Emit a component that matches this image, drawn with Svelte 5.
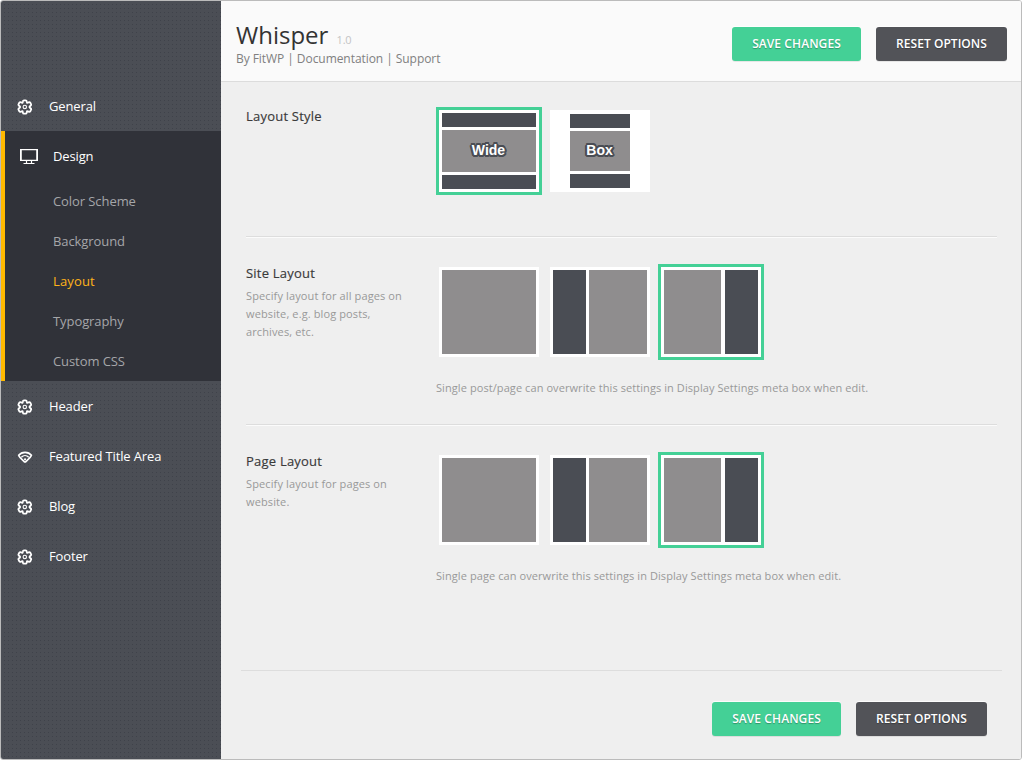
<script>
  const before = [{ label: 'General', icon: 'gear' }];
  const after = [
    { label: 'Header', icon: 'gear' },
    { label: 'Featured Title Area', icon: 'wifi' },
    { label: 'Blog', icon: 'gear' },
    { label: 'Footer', icon: 'gear' }
  ];
  const sub = ['Color Scheme', 'Background', 'Layout', 'Typography', 'Custom CSS'];
</script>

{#snippet icon(name)}
  {#if name === 'gear'}
    <svg class="icon" width="16" height="16" viewBox="0 0 16 16" fill="none" stroke="#fff">
      <path
        stroke-width="1.8"
        stroke-linejoin="round"
        d="M5.900 2.400Q6 1.300 7 1.300h1.600Q9.600 1.300 9.700 2.400L10 3.800 11.600 3.300Q12.800 2.900 13.300 3.800L14 5.100Q14.500 6 13.600 6.700L12.600 7.500v1L13.600 9.300Q14.500 10 14 10.900L13.300 12.200Q12.800 13.100 11.600 12.700L10 12.200 9.700 13.600Q9.600 14.700 8.600 14.700H7Q6 14.700 5.900 13.600L5.600 12.200 4 12.700Q2.800 13.100 2.300 12.200L1.600 10.900Q1.100 10 2 9.300L3 8.500v-1L2 6.700Q1.100 6 1.600 5.100L2.300 3.800Q2.800 2.900 4 3.300L5.600 3.800z"
      />
      <circle cx="7.800" cy="8" r="1.700" stroke-width="1.100" />
    </svg>
  {:else}
    <svg class="icon" width="16" height="16" viewBox="0 0 16 16" fill="none" stroke="#fff">
      <path stroke-width="1.800" stroke-linejoin="round" d="M1.700 6.300C4.800 2.300 11.300 2.300 14.400 6.300Q14.300 7.700 8.600 12.800H7.500Q1.800 7.700 1.700 6.300z" />
      <path stroke-width="1.300" d="M4.300 8.200c2.200-2.200 5.300-2.200 7.500 0" />
      <circle cx="8.050" cy="10.300" r="1.100" fill="#fff" stroke="none" />
    </svg>
  {/if}
{/snippet}

{#snippet actions()}
  <div class="actions">
    <button class="save">SAVE CHANGES</button>
    <button class="reset">RESET OPTIONS</button>
  </div>
{/snippet}

{#snippet layouts()}
  <div class="choices">
    <div class="choice cols"><i class="content"></i></div>
    <div class="choice cols"><i class="side"></i><i class="content"></i></div>
    <div class="choice cols right selected"><i class="content"></i><i class="side"></i></div>
  </div>
{/snippet}

<div class="frame">
  <nav>
    {#each before as item}
      <div class="item">{@render icon(item.icon)}<span>{item.label}</span></div>
    {/each}
    <div class="group">
      <div class="item">
        <svg class="icon" width="20" height="18" viewBox="0 0 20 18" fill="none" stroke="#fff">
          <path stroke-width="1.200" d="M1 1.600h18M1 12.400h18" />
          <path stroke-width="1.800" d="M1.900 1v12M18.100 1v12" />
          <path stroke-width="1.200" d="M7.500 13v2M12.500 13v2M4.500 15.500h11" />
        </svg>
        <span>Design</span>
      </div>
      {#each sub as label}
        <div class="sub" class:current={label === 'Layout'}>{label}</div>
      {/each}
    </div>
    {#each after as item}
      <div class="item">{@render icon(item.icon)}<span>{item.label}</span></div>
    {/each}
  </nav>

  <main>
    <header>
      <div>
        <h1>Whisper <small>1.0</small></h1>
        <p class="links">By FitWP | Documentation | Support</p>
      </div>
      {@render actions()}
    </header>

    <div class="body">
      <section class="first">
        <div class="label"><h2>Layout Style</h2></div>
        <div class="field">
          <div class="choices">
            <div class="choice rows wide selected"><i></i><b>Wide</b><i></i></div>
            <div class="choice rows box"><i></i><b>Box</b><i></i></div>
          </div>
        </div>
      </section>
      <section class="second">
        <div class="label">
          <h2>Site Layout</h2>
          <p>Specify layout for all pages on website, e.g. blog posts, archives, etc.</p>
        </div>
        <div class="field">
          {@render layouts()}
          <p class="note">Single post/page can overwrite this settings in Display Settings meta box when edit.</p>
        </div>
      </section>
      <section class="third">
        <div class="label">
          <h2>Page Layout</h2>
          <p>Specify layout for pages on website.</p>
        </div>
        <div class="field">
          {@render layouts()}
          <p class="note">Single page can overwrite this settings in Display Settings meta box when edit.</p>
        </div>
      </section>
    </div>

    <footer>{@render actions()}</footer>
  </main>
</div>

<style>
  :global(body) {
    background: #fff;
  }
  .frame {
    box-sizing: border-box;
    width: 1022px;
    height: 760px;
    border: 1px solid #bbb;
    border-radius: 3px;
    overflow: hidden;
    display: flex;
    font-family: 'Open Sans', sans-serif;
    font-size: 13px;
  }
  h1, h2, p {
    margin: 0;
    font-weight: 400;
  }
  nav {
    box-sizing: border-box;
    width: 220px;
    padding-top: 80px;
    background-color: #4b4e55;
    background-image: conic-gradient(from 90deg at 3px 3px, #3f424a 25%, transparent 0);
    background-size: 4px 4px;
    color: #fff;
  }
  .item {
    height: 50px;
    display: flex;
    align-items: center;
    padding-left: 16px;
    gap: 16px;
    letter-spacing: -0.14px;
  }
  .item span {
    line-height: 20px;
  }
  .icon {
    flex: none;
    margin-top: 1px;
  }
  .group {
    background: #303239;
    border-left: 4px solid #ffb900;
  }
  .group .item {
    padding-left: 14px;
    gap: 14px;
  }
  .sub {
    height: 40px;
    line-height: 40px;
    padding-left: 48px;
    color: #a5a6a9;
    letter-spacing: -0.08px;
  }
  .current {
    color: #ffb31a;
    letter-spacing: 0.15px;
  }
  main {
    flex: 1;
    background: #efefef;
    display: flex;
    flex-direction: column;
  }
  header {
    box-sizing: border-box;
    height: 81px;
    background: #fafafa;
    border-bottom: 1px solid #dcdcdc;
    display: flex;
    justify-content: space-between;
    padding: 17px 14px 0 15px;
  }
  h1 {
    font-size: 24px;
    line-height: 34px;
    color: #333;
  }
  small {
    font-size: 11px;
    color: #c4c4c4;
    margin-left: 2px;
    letter-spacing: -0.2px;
  }
  .links {
    margin-top: -5px;
    font-size: 12px;
    line-height: 14px;
    letter-spacing: -0.06px;
    color: #808080;
  }
  .actions {
    display: flex;
    gap: 15px;
  }
  header .actions {
    padding-top: 9px;
  }
  button {
    height: 34px;
    border: 0;
    border-radius: 3px;
    padding: 0;
    font: 600 12px/34px 'Open Sans', sans-serif;
    color: #fff;
    text-shadow: 0 1px 1px rgba(0, 0, 0, 0.3);
    box-shadow: 0 1px 0 rgba(0, 0, 0, 0.08), 0 -1px 0 rgba(255, 255, 255, 0.8);
  }
  .save {
    width: 129px;
    background: #44d096;
    letter-spacing: 0.08px;
  }
  .reset {
    width: 131px;
    background: #525358;
    letter-spacing: 0.05px;
  }
  .body {
    padding: 0 24px 0 25px;
  }
  section {
    box-sizing: border-box;
    display: flex;
    border-bottom: 1px solid #ddd;
    box-shadow: 0 1px 0 #fbfbfb;
  }
  .first {
    height: 155px;
    padding-top: 25px;
  }
  .second {
    height: 188px;
    padding-top: 27px;
  }
  .third {
    height: 188px;
    padding-top: 27px;
    border: 0;
    box-shadow: none;
  }
  .label {
    width: 160px;
    margin-right: 30px;
  }
  h2 {
    font-size: 13px;
    line-height: 18px;
    letter-spacing: 0.22px;
    color: #3a3a3a;
    -webkit-text-stroke: 0.15px #3a3a3a;
  }
  .label p {
    margin-top: 5px;
    font-size: 11px;
    line-height: 18px;
    letter-spacing: 0.12px;
    color: #999;
  }
  .choices {
    display: flex;
    gap: 5px;
  }
  .choice {
    box-sizing: border-box;
    width: 106px;
    border: 3px solid transparent;
    background: #fff padding-box;
    display: flex;
    gap: 3px;
    padding: 3px;
  }
  .selected {
    border-color: #44d096;
  }
  .cols {
    height: 96px;
  }
  .content {
    flex: 1;
    background: #8f8d8e;
  }
  .side {
    width: 33px;
    background: #4a4d54;
  }
  .right {
    gap: 4px;
  }
  .rows {
    height: 88px;
    flex-direction: column;
  }
  .box {
    padding: 4px 20px;
  }
  .rows i {
    height: 14px;
    background: #4a4d54;
  }
  .rows b {
    flex: 1;
    background: #8f8d8e;
    display: flex;
    align-items: center;
    justify-content: center;
    padding: 0 1px 2px 0;
    font: bold 14px/16px 'Liberation Sans', Arial, sans-serif;
    color: #fff;
    text-shadow: 2px 0 #4a4d54, -2px 0 #4a4d54, 0 2px #4a4d54, 0 -2px #4a4d54, 1px 1px #4a4d54,
      -1px 1px #4a4d54, 1px -1px #4a4d54, -1px -1px #4a4d54, 1px 2px #4a4d54, -1px 2px #4a4d54,
      2px 1px #4a4d54, -2px 1px #4a4d54, 1px -2px #4a4d54, -1px -2px #4a4d54;
  }
  .note {
    margin-top: 19px;
    font-size: 11px;
    line-height: 18px;
    letter-spacing: 0.08px;
    color: #999;
  }
  footer {
    margin: auto 19px 0 20px;
    box-sizing: border-box;
    height: 89px;
    border-top: 1px solid #ddd;
    padding: 31px 15px 0 0;
    display: flex;
    justify-content: flex-end;
  }
</style>
